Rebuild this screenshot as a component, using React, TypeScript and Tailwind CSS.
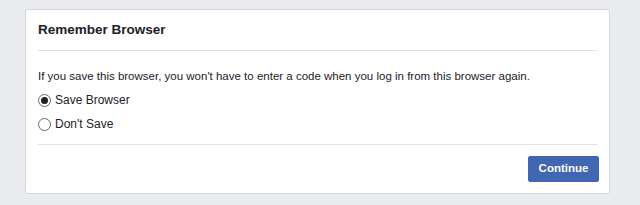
import React from "react";

function Radio({ checked }: { checked?: boolean }) {
  return (
    <span className="w-[13px] h-[13px] rounded-full border border-[#6b6b6b] bg-white flex items-center justify-center shrink-0">
      {checked && <span className="w-[7px] h-[7px] rounded-full bg-[#1d2129]" />}
    </span>
  );
}

export default function App() {
  return (
    <div
      className="w-[640px] h-[205px] bg-[#e9ebee] pl-[25px] pt-[9px]"
      style={{ fontFamily: '"Liberation Sans", Arial, sans-serif' }}
    >
      <div className="w-[585px] h-[185px] bg-white border border-[#d3d6db] rounded-[3px] flex flex-col">
        <div className="mx-3 h-[41px] border-b border-[#dddfe2] flex items-center">
          <span className="text-[13.5px] font-bold text-[#1d2129]">Remember Browser</span>
        </div>
        <div className="mx-3 pt-[17px] pb-[12px] border-b border-[#dddfe2] text-[12px] text-[#1d2129] leading-[16px]">
          <div className="text-[11.5px]">If you save this browser, you won't have to enter a code when you log in from this browser again.</div>
          <label className="mt-[8px] flex items-center gap-[4px]">
            <Radio checked />
            <span>Save Browser</span>
          </label>
          <label className="mt-[8px] flex items-center gap-[4px]">
            <Radio />
            <span>Don't Save</span>
          </label>
        </div>
        <div className="pt-[11px] pr-[10px] flex justify-end">
          <button className="w-[71px] h-[26px] bg-[#4267b2] border border-[#4267b2] rounded-[2px] text-white text-[11.5px] font-bold">
            Continue
          </button>
        </div>
      </div>
    </div>
  );
}
